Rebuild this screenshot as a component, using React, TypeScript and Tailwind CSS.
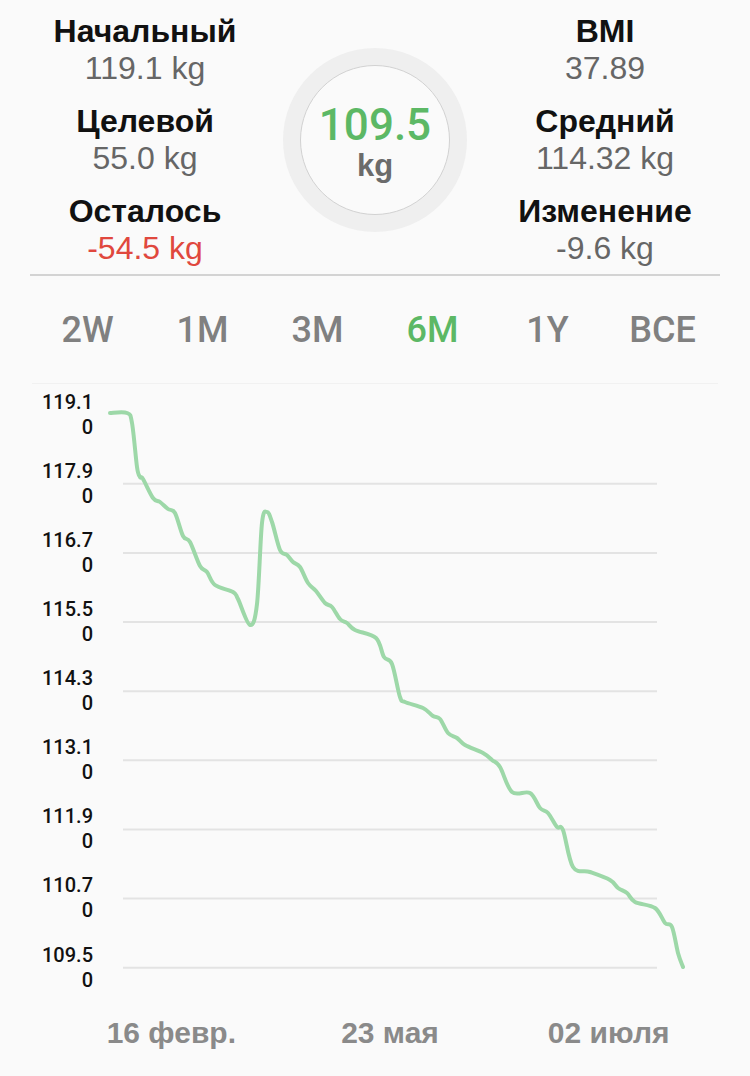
import React from "react";

const PTS: [number, number][] = [
  [110, 413], [127, 413], [132, 423], [137, 467], [140, 477], [143, 479], [153, 498], [160, 502],
  [168, 509], [175, 513], [183, 536], [190, 542], [200, 566], [207, 572], [215, 585], [233, 592],
  [238, 599], [250, 625], [257, 604], [262, 523], [267, 512], [272, 522], [280, 550], [287, 555],
  [293, 562], [300, 567], [308, 583], [316, 591], [325, 603], [332, 607], [340, 619], [347, 623],
  [355, 630], [376, 638], [384, 657], [392, 664], [400, 697], [405, 702], [423, 708], [433, 716],
  [440, 719], [448, 733], [457, 738], [465, 745], [483, 753], [492, 760], [500, 767], [512, 792],
  [530, 793], [540, 808], [548, 813], [557, 827], [563, 830], [573, 867], [590, 872], [610, 880],
  [618, 888], [627, 893], [635, 902], [655, 908], [665, 923], [672, 927], [678, 953], [683, 967],
];

function smoothPath(pts: [number, number][]): string {
  let d = `M${pts[0][0]},${pts[0][1]}`;
  for (let i = 0; i < pts.length - 1; i++) {
    const p0 = pts[i - 1] || pts[i];
    const p1 = pts[i];
    const p2 = pts[i + 1];
    const p3 = pts[i + 2] || p2;
    const t = 6;
    const c1x = p1[0] + (p2[0] - p0[0]) / t;
    const c1y = p1[1] + (p2[1] - p0[1]) / t;
    const c2x = p2[0] - (p3[0] - p1[0]) / t;
    const c2y = p2[1] - (p3[1] - p1[1]) / t;
    d += ` C${c1x.toFixed(1)},${c1y.toFixed(1)} ${c2x.toFixed(1)},${c2y.toFixed(1)} ${p2[0]},${p2[1]}`;
  }
  return d;
}

const FONT = { fontFamily: '"Liberation Sans", Arial, sans-serif' };
const ROBOTO = { fontFamily: 'Roboto, "Liberation Sans", sans-serif' };

function Stat({ label, value, red }: { label: string; value: string; red?: boolean }) {
  return (
    <div className="flex flex-col items-center">
      <div className="text-[32px] leading-[37px] font-bold text-[#111111]">{label}</div>
      <div className={`text-[32px] leading-[37px] ${red ? "text-[#e0483e]" : "text-[#666666]"}`}>{value}</div>
    </div>
  );
}

const Y_LABELS = ["119.1", "117.9", "116.7", "115.5", "114.3", "113.1", "111.9", "110.7", "109.5"];
const GRID_Y = [1, 2, 3, 4, 5, 6, 7, 8].map((k) => 414.6 + k * 69.14);

export default function App() {
  const d = smoothPath(PTS);
  return (
    <div className="w-[750px] h-[1076px] bg-[#fafafa] overflow-hidden" style={FONT}>
      {/* Header */}
      <div className="grid grid-cols-[1fr_184px_1fr] items-center px-[7px] pt-[13px]">
        <div className="flex flex-col gap-[16px]">
          <Stat label="Начальный" value="119.1 kg" />
          <Stat label="Целевой" value="55.0 kg" />
          <Stat label="Осталось" value="-54.5 kg" red />
        </div>
        <div className="w-[184px] h-[184px] rounded-full bg-[#efefef] flex items-center justify-center">
          <div className="w-[150px] h-[150px] rounded-full border-[1.5px] border-[#d2d2d2] bg-[#fafafa] flex flex-col items-center justify-center pt-[4px]">
            <div className="text-[44px] leading-[48px] font-medium text-[#5cb865]" style={ROBOTO}>109.5</div>
            <div className="text-[31px] leading-[34px] font-bold text-[#6b6b6b]">kg</div>
          </div>
        </div>
        <div className="flex flex-col gap-[16px]">
          <Stat label="BMI" value="37.89" />
          <Stat label="Средний" value="114.32 kg" />
          <Stat label="Изменение" value="-9.6 kg" />
        </div>
      </div>
      <div className="mt-[7px] mx-[30px] h-[2px] bg-[#d3d3d3]" />

      {/* Tabs */}
      <div
        className="grid grid-cols-6 mx-[30px] pt-[34px] pb-[33px] text-center text-[36px] leading-[40px] font-medium text-[#808080]"
        style={ROBOTO}
      >
        <div>2W</div>
        <div>1M</div>
        <div>3M</div>
        <div className="text-[#5cb865]">6M</div>
        <div>1Y</div>
        <div>BCE</div>
      </div>

      {/* Chart */}
      <div className="mx-[32px] h-px bg-[#f1f1f1]" />
      <div className="flex">
        <div
          className="w-[93px] flex flex-col gap-[19.14px] pt-[5.6px] text-right text-[20px] leading-[25px] font-medium text-[#111111]"
          style={ROBOTO}
        >
          {Y_LABELS.map((l) => (
            <div key={l} className="h-[50px]">
              <div>{l}</div>
              <div>0</div>
            </div>
          ))}
        </div>
        <svg width="657" height="620" viewBox="93 384 657 620" className="block">
          {GRID_Y.map((y) => (
            <line key={y} x1="123" x2="657" y1={y} y2={y} stroke="#e3e3e3" strokeWidth="2" />
          ))}
          <path d={d} fill="none" stroke="#9dd8a8" strokeWidth="4" strokeLinecap="round" strokeLinejoin="round" />
        </svg>
      </div>

      {/* X labels */}
      <div className="grid grid-cols-3 w-[656px] ml-[62px] mt-[11px] text-center text-[30px] leading-[36px] font-bold text-[#8a8a8a]">
        <div>16 февр.</div>
        <div>23 мая</div>
        <div>02 июля</div>
      </div>
    </div>
  );
}
